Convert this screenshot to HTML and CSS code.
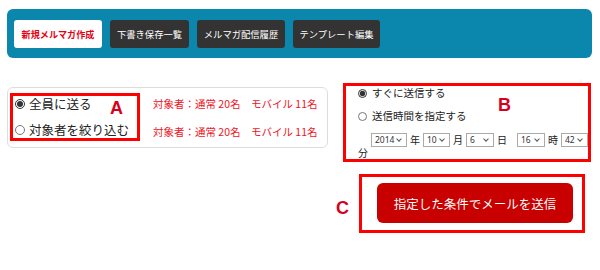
FILE: index.html
```html
<!DOCTYPE html>
<html lang="ja">

<head>
    <meta charset="UTF-8">
    <meta name="viewport" content="width=device-width, initial-scale=1.0">
    <link rel="stylesheet" href="styles.css">
    <title>メルマガ作成</title>
</head>

<body>
    <div class="tabs">
        <a class="tab current w88" href="#">新規メルマガ作成</a>
        <a class="tab w79" href="#">下書き保存一覧</a>
        <a class="tab w88" href="#">メルマガ配信履歴</a>
        <a class="tab w87" href="#">テンプレート編集</a>
    </div>

    <div class="settings">
        <div class="target">
            <div class="mark box-a">
                <label class="choice big"><input type="radio" name="target" checked>全員に送る</label>
                <label class="choice big"><input type="radio" name="target">対象者を絞り込む</label>
                <span class="letter letter-a">A</span>
            </div>
            <div class="counts">
                <p>対象者：通常 20名　モバイル 11名</p>
                <p>対象者：通常 20名　モバイル 11名</p>
            </div>
        </div>

        <div class="mark box-b">
            <label class="choice"><input type="radio" name="when" checked>すぐに送信する</label>
            <label class="choice"><input type="radio" name="when">送信時間を指定する</label>
            <div class="date-row">
                <span class="sel w36"><select><option>2014</option></select></span><span class="unit">年</span>
                <span class="sel w27"><select><option>10</option></select></span><span class="unit">月</span>
                <span class="sel w28"><select><option>6</option></select></span><span class="unit wide">日</span>
                <span class="sel w28"><select><option>16</option></select></span><span class="unit">時</span>
                <span class="sel w27"><select><option>42</option></select></span>
            </div>
            <div class="unit-end">分</div>
            <span class="letter letter-b">B</span>
        </div>
    </div>

    <div class="send-area">
        <div class="mark box-c">
            <button class="send">指定した条件でメールを送信</button>
            <span class="letter letter-c">C</span>
        </div>
    </div>
</body>

</html>
```

FILE: styles.css
```css
* {
    margin: 0;
    padding: 0;
    box-sizing: border-box;
}

body {
    width: 600px;
    font-family: "Noto Sans CJK JP", "Noto Sans", sans-serif;
    color: #333;
    background: #fff;
}

.tabs {
    display: flex;
    gap: 8px;
    width: 585px;
    height: 49px;
    margin: 9px 0 0 7px;
    padding: 11px 7px 0;
    background: #0b87ae;
    border-radius: 6px;
}

.tab {
    display: flex;
    align-items: center;
    justify-content: center;
    height: 28px;
    background: #333;
    color: #fff;
    font-size: 9.3px;
    text-decoration: none;
    border-radius: 3px;
    white-space: nowrap;
}

.tab.current {
    background: #fff;
    color: #e60012;
    font-weight: bold;
    font-size: 9.1px;
}

.w88 { width: 88px; }
.w87 { width: 87px; }
.w79 { width: 79px; }

.settings {
    display: flex;
    align-items: flex-start;
    margin-top: 25px;
}

.target {
    display: flex;
    width: 321px;
    height: 61px;
    margin: 4px 0 0 7px;
    padding: 5px 0 0 2px;
    border: 1px solid #ddd;
    border-radius: 6px;
}

.mark {
    position: relative;
    border: 3px solid #ff0000;
}

.box-a {
    display: flex;
    flex-direction: column;
    gap: 10px;
    width: 130px;
    height: 48px;
}

.choice {
    display: flex;
    align-items: center;
    font-size: 10.5px;
    line-height: 14px;
    color: #222;
    white-space: nowrap;
}

.choice input {
    width: 9px;
    height: 9px;
    margin: 0 5px 0 0;
    accent-color: #333;
}

.choice.big {
    font-size: 12.5px;
    line-height: 16px;
}

.choice.big input {
    width: 10px;
    height: 10px;
    margin: 0 4px 0 2px;
}

.counts {
    margin-left: 13px;
    padding-top: 4px;
    color: #f0141e;
    font-size: 10.5px;
    line-height: 14px;
    white-space: nowrap;
}

.counts p + p {
    margin-top: 14px;
}

.letter {
    position: absolute;
    font-family: "Liberation Sans", sans-serif;
    font-weight: bold;
    font-size: 18px;
    line-height: 18px;
    color: #d6001c;
}

.letter-a {
    left: 97px;
    top: 3px;
}

.box-b {
    width: 248px;
    height: 79px;
    margin-left: 15px;
    padding-left: 12px;
}

.box-b .choice + .choice {
    margin-top: 9px;
}

.date-row {
    display: flex;
    align-items: center;
    height: 14px;
    margin-top: 10px;
    padding-left: 13px;
}

.sel {
    position: relative;
    display: block;
    height: 14px;
}

.sel select {
    display: block;
    appearance: none;
    width: 100%;
    height: 14px;
    padding: 0 0 0 3px;
    border: 1px solid #aaa;
    border-radius: 0;
    background: #fff;
    font-family: "Noto Sans", sans-serif;
    font-size: 8.5px;
    line-height: 12px;
    color: #333;
}

.sel::after {
    content: "";
    position: absolute;
    right: 6px;
    top: 4px;
    width: 3px;
    height: 3px;
    border-right: 1px solid #555;
    border-bottom: 1px solid #555;
    transform: rotate(45deg);
    pointer-events: none;
}

.w36 { width: 36px; }
.w27 { width: 27px; }
.w28 { width: 28px; }

.unit {
    margin: 0 3px 0 3px;
    font-size: 10px;
    line-height: 14px;
    color: #222;
}

.unit.wide {
    margin-right: 10px;
}

.unit-end {
    font-size: 10px;
    line-height: 12px;
    color: #222;
}

.letter-b {
    left: 152px;
    top: 10px;
}

.send-area {
    display: flex;
    margin-top: 12px;
    padding-left: 359px;
}

.box-c {
    width: 226px;
    height: 59px;
    padding: 6px 9px 0 15px;
}

.send {
    display: block;
    width: 196px;
    height: 40px;
    border: none;
    border-radius: 6px;
    background: #c80000;
    color: #fff;
    font-family: "Noto Sans CJK JP", sans-serif;
    font-size: 12.5px;
}

.letter-c {
    left: -26px;
    top: 22px;
}
```
